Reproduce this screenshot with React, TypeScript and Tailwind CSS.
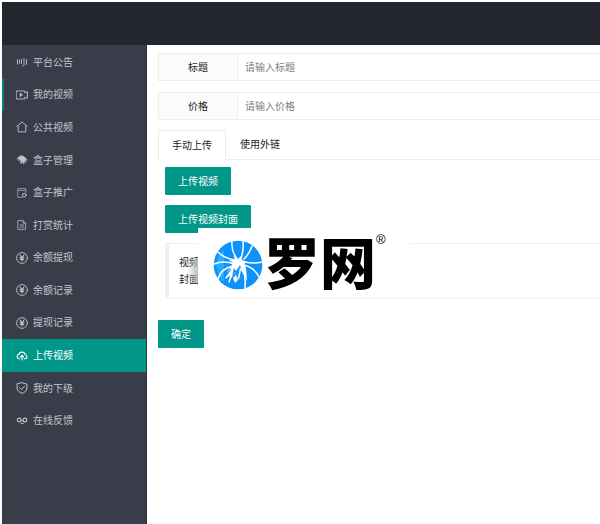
import type { ReactNode } from "react";

type Item = { label: string; icon: ReactNode; active?: boolean; marked?: boolean };

function Icon({ children }: { children: ReactNode }) {
  return (
    <svg
      viewBox="0 0 12 12"
      className="h-3 w-3 shrink-0"
      fill="none"
      stroke="currentColor"
      strokeWidth="1"
      strokeLinecap="round"
      strokeLinejoin="round"
      aria-hidden="true"
    >
      {children}
    </svg>
  );
}

const yen = (
  <Icon>
    <circle cx="6" cy="6" r="5.4" strokeWidth="0.9" />
    <path d="M4 3l2 2.6L8 3M6 5.6V9M4 5.8h4M4.3 7.4h3.4" strokeWidth="1.1" />
  </Icon>
);

const items: Item[] = [
  {
    label: "平台公告",
    icon: (
      <Icon>
        <path d="M1.5 3.5v4.5M3.5 4v3.5M5.5 3.5v4M8 2.5V9c0 .7-.5 1-1.2 1M10.5 3.5v5" strokeWidth="0.9" />
      </Icon>
    ),
  },
  {
    label: "我的视频",
    marked: true,
    icon: (
      <Icon>
        <path d="M.6 2h8.2v1.8l2.6-1v6.4l-2.6-1V10H.6z" strokeWidth="0.9" />
        <path d="M4 4.4v3.2L6.6 6z" fill="currentColor" strokeWidth="0.5" />
      </Icon>
    ),
  },
  {
    label: "公共视频",
    icon: (
      <Icon>
        <path d="M.8 5.4L6 1l5.2 4.400M2.2 4.6v6.3h7.6V4.6" strokeWidth="0.9" />
      </Icon>
    ),
  },
  {
    label: "盒子管理",
    icon: (
      <Icon>
        <path
          d="M1 5L4.200 1.600 5.200 2.500 6.500 1.500 8 2.800C9.500 3.600 10.800 5 11 6.800L8.800 5.800 9.800 9 8.200 7.800 7.600 10.200 6.200 7.200 5.200 9.800 4.200 8.800 4.800 5.600 2.600 6.600 3.200 4.800z"
          fill="currentColor"
          strokeWidth="0.4"
        />
      </Icon>
    ),
  },
  {
    label: "盒子推广",
    icon: (
      <Icon>
        <path d="M6 10.4H1.8V1.600h8v4M1.8 3.4h8" strokeWidth="0.8" opacity="0.8" />
        <circle cx="8.2" cy="8.2" r="1.8" strokeWidth="1" />
      </Icon>
    ),
  },
  {
    label: "打赏统计",
    icon: (
      <Icon>
        <path d="M2.2 1.6H7l2.6 2.6v6.2H2.2zM7 1.6v2.6h2.6M4 6h3.8M4 8h3.8" strokeWidth="0.9" opacity="0.8" />
      </Icon>
    ),
  },
  { label: "余额提现", icon: yen },
  { label: "余额记录", icon: yen },
  { label: "提现记录", icon: yen },
  {
    label: "上传视频",
    active: true,
    icon: (
      <Icon>
        <path d="M3.6 8.8H2.9A2.2 2.2 0 0 1 2.7 4.5 3.4 3.4 0 0 1 9.2 4.5a2.2 2.2 0 0 1 0 4.3H8.3M6 10V5.6M4.4 7L6 5.4 7.6 7" strokeWidth="1.1" />
      </Icon>
    ),
  },
  {
    label: "我的下级",
    icon: (
      <Icon>
        <path d="M6 .7l4.9 1.5v4C10.9 8.8 8.4 10.5 6 11.4 3.6 10.5 1.1 8.8 1.1 6.2v-4zM3.7 5.7l1.8 1.8 3-3.2" />
      </Icon>
    ),
  },
  {
    label: "在线反馈",
    icon: (
      <Icon>
        <circle cx="3.2" cy="5" r="1.9" strokeWidth="1.1" />
        <circle cx="9" cy="5" r="1.9" strokeWidth="1.1" />
        <path d="M5 5.500h2M5 8.200h2.500" strokeWidth="1.1" />
      </Icon>
    ),
  },
];

function Field({ id, label, placeholder }: { id: string; label: string; placeholder: string }) {
  return (
    <div className="flex h-7 border-y border-l border-[#ececec]">
      <label
        htmlFor={id}
        className="flex w-[79px] shrink-0 items-center justify-center border-r border-[#ececec] bg-[#fbfbfb] pb-0.5"
      >
        {label}
      </label>
      <input
        id={id}
        type="text"
        placeholder={placeholder}
        className="min-w-0 flex-1 px-[7px] pb-0.5 outline-none placeholder:text-[#808080]"
      />
    </div>
  );
}

function Action({ children }: { children: ReactNode }) {
  return (
    <button type="button" className="block h-7 rounded-[1px] bg-[#009688] px-[13px] pb-0.5 text-white">
      {children}
    </button>
  );
}

function Brand() {
  return (
    <div className="absolute -top-[15px] left-[33px] flex h-[68px] w-[212px] items-start bg-white pt-3 pl-[15px]">
      <svg viewBox="0 0 50 50" className="h-[50px] w-[50px] shrink-0" aria-hidden="true">
        <circle cx="25" cy="25" r="24.3" fill="#0d91fb" />
        <path d="M8 12q-4 6-5 13l4 14 4 3V10z" fill="#25adff" />
        <g fill="none" stroke="#fff" strokeWidth="1.5" strokeLinecap="round" strokeLinejoin="round">
          <path d="M23 20Q12 19 5 12M25 20Q18 12 19 1M28 18Q31 10 30 1M31 19Q37 13 39 6M32 22Q40 24 49 22M31 25Q42 28 46 37M30 27Q33 38 32 48M22 24Q10 20 1 24M21 26Q8 28 5 39" />
          <path d="M21 27l-8 11 6-5-3 9" />
        </g>
        <path
          d="M20 16l5 3 3-3 1 4 5 2-3 2 2 4 1 13-6-11-2 10-4-8-5 8 1-12-5 6 7-11-4-3 6-1z"
          fill="#fff"
        />
        <path d="M21 28l-2 8 3-4 3 6 2-11 2 3-2-5-4 6z" fill="#0d91fb" />
        <path d="M20 38l3-3 2 5-3 3z" fill="#fff" />
      </svg>
      <span className="ml-px text-[56px] leading-10 font-black text-black">罗网</span>
      <span className="-mt-[10px] font-['Liberation_Sans',sans-serif] text-[13px] leading-[20px] text-black">®</span>
    </div>
  );
}

export default function App() {
  return (
    <div className="flex min-h-screen flex-col bg-white pt-[2px] pl-[2px] font-['Noto_Sans_CJK_SC','Liberation_Sans',sans-serif] text-[10px] leading-[17px] text-[#222]">
      <header className="h-[43px] shrink-0 bg-[#23262e]" />
      <div className="flex flex-1">
        <aside className="w-[145px] shrink-0 border-r border-[#2e323d] bg-[#393d49] pt-px">
          <nav className="grid h-[391px] grid-rows-12 text-[#c3c5ca]">
            {items.map((item) => (
              <a
                key={item.label}
                href="#"
                className={
                  item.active
                    ? "flex items-center gap-[5px] bg-[#009688] pl-[14px] text-white"
                    : item.marked
                      ? "flex items-center gap-[5px] border-l-2 border-[#0a8078] pl-3"
                      : "flex items-center gap-[5px] pl-[14px]"
                }
              >
                {item.icon}
                <span className="pb-0.5">{item.label}</span>
              </a>
            ))}
          </nav>
        </aside>
        <main className="min-w-0 flex-1 pt-2 pl-[11px]">
          <form onSubmit={(e) => e.preventDefault()}>
            <div className="flex flex-col gap-[11px]">
              <Field id="title" label="标题" placeholder="请输入标题" />
              <Field id="price" label="价格" placeholder="请输入价格" />
            </div>
            <div role="tablist" className="mt-[10px] flex h-[30px] border-b border-[#ececec]">
              <button
                type="button"
                role="tab"
                aria-selected="true"
                className="-mb-px border border-b-0 border-[#ececec] bg-white px-[13px] pb-[3px]"
              >
                手动上传
              </button>
              <button type="button" role="tab" aria-selected="false" className="px-[14px] pb-[3px]">
                使用外链
              </button>
            </div>
            <div className="flex flex-col items-start gap-[10px] pt-[7px] pl-[7px]">
              <Action>上传视频</Action>
              <Action>上传视频封面</Action>
              <div className="relative w-full">
                <blockquote className="border-y border-l-4 border-[#f0f0f0] pt-[9px] pb-[11px] pl-[10px]">
                  <p>视频</p>
                  <p>封面</p>
                </blockquote>
                <div className="absolute top-4 left-[22px] h-6 w-3 bg-linear-to-r from-transparent to-[#b4bcc0]" />
                <Brand />
              </div>
            </div>
            <div className="mt-[21px]">
              <Action>确定</Action>
            </div>
          </form>
        </main>
      </div>
    </div>
  );
}
